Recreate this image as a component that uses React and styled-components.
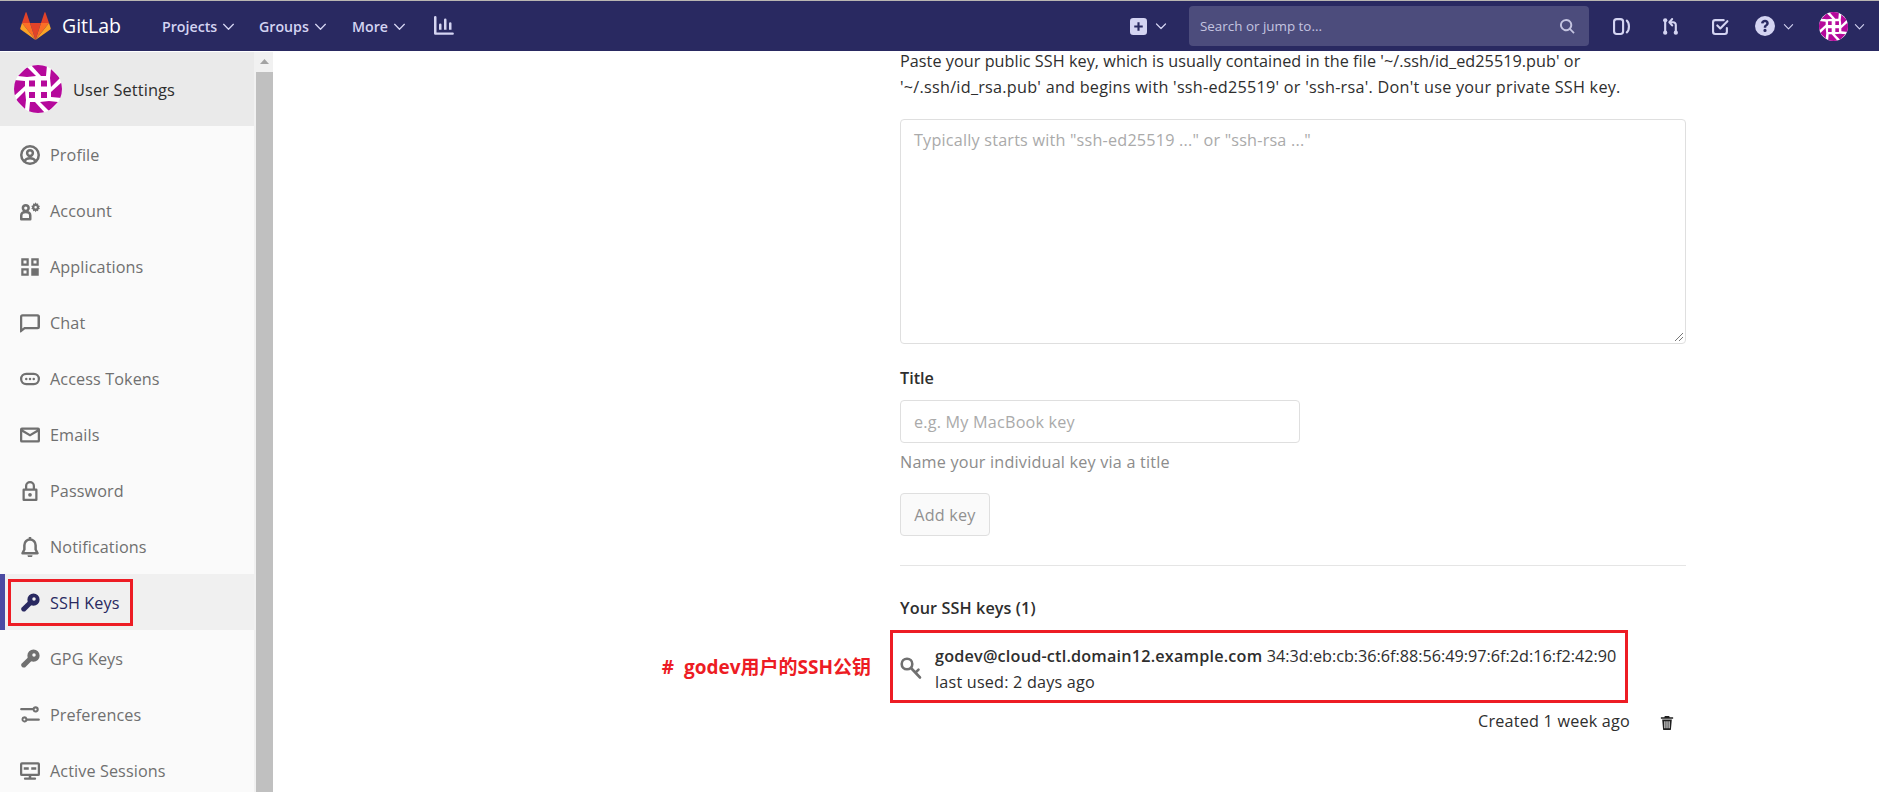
import React from 'react';
import styled, { createGlobalStyle } from 'styled-components';

const Global = createGlobalStyle`
  html, body { margin: 0; padding: 0; height: 792px; overflow: hidden; background: #fff; }
  body { font-family: "Open Sans", "Noto Sans CJK SC", sans-serif; font-size: 16.2px; letter-spacing: .2px; color: #2e2e2e; }
  * { box-sizing: border-box; }
`;

const Page = styled.div`display: flex; flex-direction: column; height: 792px; overflow: hidden;`;
const Header = styled.header`
  height: 51px; flex: none; display: flex; align-items: center; background: #292961;
  border-top: 1px solid #b9b6b2; padding: 0 14px 0 20px; color: #d1d1f0; letter-spacing: 0;
`;
const Brand = styled.div`display: flex; align-items: center; gap: 11px; width: 142px;`;
const BrandName = styled.span`color: #fff; font-size: 19.5px; line-height: 1;`;
const NavLink = styled.span`
  display: flex; align-items: center; gap: 5px; width: ${p => p.$w}px;
  font-size: 14.2px; font-weight: 600; color: #d4d4f2;
`;
const Spacer = styled.div`flex: 1;`;
const Search = styled.div`
  width: 400px; height: 40px; margin-right: 24px; border-radius: 4px; background: #4c4c7c;
  display: flex; align-items: center; justify-content: space-between; padding: 0 14px 0 11px;
  color: #c4c4e0; font-size: 13.4px;
`;
const HeaderIcon = styled.span`display: flex; align-items: center; gap: ${p => p.$gap || 8}px; width: ${p => p.$w}px; color: #d4d4f2;`;

const Body = styled.div`flex: 1; display: flex; min-height: 0;`;
const Sidebar = styled.aside`width: 254px; flex: none; background: #fafafa; overflow: hidden; margin-top: 1px;`;
const SideHead = styled.div`
  height: 74px; background: #eaeaea; display: flex; align-items: center; gap: 11px; padding-left: 14px;
  font-size: 16.4px; font-weight: 500; letter-spacing: .1px; color: #2e2e2e;
`;
const SideItem = styled.div`
  position: relative; height: 56px; display: flex; align-items: center; gap: 10px; padding: 2px 0 0 20px;
  font-size: 16.2px; letter-spacing: .1px; color: ${p => p.$active ? '#292961' : '#707070'};
  font-weight: ${p => p.$active ? 500 : 400};
  background: ${p => p.$active ? '#f0f0f0' : 'transparent'};
  box-shadow: ${p => p.$active ? 'inset 5px 0 0 #4b4ba3' : 'none'};
  & > svg { flex: none; }
`;
const Callout = styled.span`
  position: absolute; left: 8px; top: 5px; width: 125px; height: 47px; border: 3px solid #ed1c24; pointer-events: none;
`;
const Scrollbar = styled.div`width: 19px; flex: none; background: #f1f1f1; padding: 0 0 0 2px; display: flex; flex-direction: column; margin-top: 1px;`;
const ScrollUp = styled.div`height: 20px; display: flex; justify-content: center; padding-top: 7px;`;
const ScrollThumb = styled.div`flex: 1; background: #c0c0c0;`;

const Main = styled.main`flex: 1; padding: 0 0 0 627px; background: #fff; position: relative;`;
const Column = styled.div`width: 786px; margin-top: -3px;`;
const IntroLine = styled.div`line-height: 26px; white-space: nowrap; letter-spacing: ${p => p.$spacing}px; color: #2e2e2e;`;
const TextArea = styled.div`
  height: 225px; margin-top: 19px; border: 1px solid #dfdfdf; border-radius: 4px; position: relative;
  padding: 10px 13px; line-height: 21px; color: #aaa;
`;
const Grip = styled.svg`position: absolute; right: 1px; bottom: 1px;`;
const Label = styled.div`margin-top: 21px; font-weight: 600; letter-spacing: 0; line-height: 26px; color: #2e2e2e;`;
const Input = styled.div`
  width: 400px; height: 43px; margin-top: 9px; border: 1px solid #dfdfdf; border-radius: 4px;
  display: flex; align-items: center; padding-left: 13px; color: #aaa;
`;
const Help = styled.div`margin-top: 6px; line-height: 26px; color: #8c8c8c;`;
const Button = styled.div`
  width: 90px; height: 43px; margin-top: 18px; padding-top: 1px; border: 1px solid #dfdfdf; border-radius: 4px; background: #fafafa;
  display: flex; align-items: center; justify-content: center; color: #919191;
`;
const Rule = styled.hr`margin: 29px 0 0; border: 0; border-top: 1px solid #e5e5e5;`;
const KeysTitle = styled.div`margin-top: 29px; font-weight: 600; letter-spacing: .1px; line-height: 26px; color: #2e2e2e;`;
const KeyRow = styled.div`position: relative; margin-top: 9px; height: 73px; display: flex; align-items: center; gap: 12px; padding-top: 4px;`;
const KeyBox = styled.span`position: absolute; left: -10px; top: 0; width: 738px; height: 73px; border: 3px solid #ed1c24; pointer-events: none;`;
const Annotation = styled.span`
  position: absolute; right: calc(100% + 29px); top: 25px; white-space: nowrap; letter-spacing: 0;
  font-size: 19px; font-weight: 700; color: #ed1c24; line-height: 24px;
`;
const KeyText = styled.div`line-height: 26px; color: #2e2e2e; white-space: nowrap;`;
const KeyName = styled.strong`font-weight: 600; letter-spacing: .2px;`;
const Fingerprint = styled.span`letter-spacing: 0;`;
const KeyMeta = styled.div`
  display: flex; align-items: center; justify-content: flex-end; gap: 30px; margin-top: 5px; height: 26px;
  padding-right: 12px; color: #2e2e2e;
`;
const TrashWrap = styled.span`display: flex; margin-top: 3px;`;

const Avatar = ({ size }) => {
  const piece = (
    <>
      <polygon points="17,0 33,0 32,11 27,11" />
      <polygon points="4,11 13,2 22,11 13,12" />
    </>
  );
  return (
    <svg width={size} height={size} viewBox="0 0 48 48" style={{ flex: 'none' }}>
      <circle cx="24" cy="24" r="24" fill="#fff" />
      <defs><clipPath id={`c${size}`}><circle cx="24" cy="24" r="24" /></clipPath></defs>
      <g clipPath={`url(#c${size})`} fill="#b5099b">
        {[0, 90, 180, 270].map(a => <g key={a} transform={`rotate(${a} 24 24)`}>{piece}</g>)}
        <path d="M15 15.500h6v6h-6zM27 15.500h6v6h-6zM15 27h6v6h-6zM27 27h6v6h-6z" />
      </g>
    </svg>
  );
};

const Ic = ({ children, size = 16, color = 'currentColor' }) => (
  <svg width={size} height={size} viewBox="0 0 16 16" fill={color} style={{ flex: 'none' }}>{children}</svg>
);
const Line = styled.g`fill: none; stroke: currentColor; stroke-width: 2; stroke-linecap: round; stroke-linejoin: round;`;
const Chevron = ({ size = 13 }) => (
  <svg width={size} height={size} viewBox="0 0 12 12" fill="none" stroke="currentColor" strokeWidth="1.2" strokeLinecap="round" strokeLinejoin="round" style={{ flex: 'none' }}><path d="M1.5 4l4.500 4.500L10.500 4" /></svg>
);
const Logo = () => (
  <svg width="31" height="29" viewBox="0 0 31 29" style={{ flex: 'none' }}>
    <path fill="#e24329" d="M15.500 28 21 11H10z" />
    <path fill="#fc6d26" d="M15.500 28 10 11H2z" />
    <path fill="#fca326" d="M2 11 .3 16.200c-.2.500 0 1 .4 1.300L15.500 28z" />
    <path fill="#e24329" d="M2 11h8L6.600.7c-.2-.5-.9-.5-1.100 0z" />
    <path fill="#fc6d26" d="M15.500 28 21 11h8z" />
    <path fill="#fca326" d="M29 11l1.700 5.200c.2.500 0 1-.4 1.300L15.500 28z" />
    <path fill="#e24329" d="M29 11h-8L24.400.7c.2-.5.9-.5 1.100 0z" />
  </svg>
);

const keyIcon = (
  <>
    <path fillRule="evenodd" d="M10.800.4a4.900 4.900 0 1 1 0 9.800 4.900 4.900 0 0 1 0-9.800zm.4 2.900a1.400 1.400 0 1 0 0 2.800 1.400 1.400 0 0 0 0-2.800z" />
    <path d="M7 6.200 9.800 9 4 14.800H2.200L1 13.600V12z" />
  </>
);
const icons = {
  profile: <Line><circle cx="8" cy="8" r="7" /><circle cx="8" cy="6.400" r="2.300" /><path d="M3.500 13c.8-1.800 2.500-2.500 4.500-2.500s3.700.7 4.500 2.500" /></Line>,
  account: <><Line><circle cx="4.600" cy="5.600" r="2.300" /><path d="M1 14.600v-3c0-1.600 1.400-2.800 3.600-2.800s3.600 1.200 3.600 2.800v3z" /></Line><path fillRule="evenodd" d="M12.500 1l.7 1.200 1.300-.3.100 1.400L16 4l-.8 1.100.8 1-1.400.7-.1 1.300-1.300-.3-.7 1.200-.7-1.200-1.300.3-.1-1.300L9 6.100l.8-1L9 4l1.400-.7.1-1.400 1.300.3zm0 3a1 1 0 1 0 0 2 1 1 0 0 0 0-2z" /></>,
  apps: <><path fillRule="evenodd" d="M1 1h6v6H1zm1.800 1.800v2.400h2.400V2.800zM9 1h6v6H9zm1.800 1.800v2.400h2.400V2.800zM1 9h6v6H1zm1.800 1.800v2.400h2.400v-2.400z" /><path d="M9 9h6v6H9z" /></>,
  chat: <path fillRule="evenodd" d="M2 1h12a2 2 0 0 1 2 2v8a2 2 0 0 1-2 2H4l-3.300 2.600c-.3.200-.7 0-.7-.4V3a2 2 0 0 1 2-2zm0 1.800a.2.2 0 0 0-.2.200v9.400l1.600-1.200h10.400a.2.200 0 0 0 .2-.2V3a.2.200 0 0 0-.2-.2z" />,
  token: <path fillRule="evenodd" d="M5 3h6a5 5 0 0 1 0 10H5A5 5 0 0 1 5 3zm0 1.800a3.200 3.200 0 0 0 0 6.400h6a3.200 3.200 0 0 0 0-6.400zM5 7a1 1 0 1 1 0 2 1 1 0 0 1 0-2zm3 0a1 1 0 1 1 0 2 1 1 0 0 1 0-2zm3 0a1 1 0 1 1 0 2 1 1 0 0 1 0-2z" />,
  mail: <path fillRule="evenodd" d="M1.500 2h13A1.500 1.500 0 0 1 16 3.500v9a1.500 1.500 0 0 1-1.500 1.500h-13A1.500 1.500 0 0 1 0 12.500v-9A1.500 1.500 0 0 1 1.500 2zm.3 3.600v6.600h12.400V5.600L8 9.200zm.6-1.800L8 7.100l5.600-3.300z" />,
  lock: <path fillRule="evenodd" d="M8 0a4 4 0 0 1 4 4v2h1a1 1 0 0 1 1 1v8a1 1 0 0 1-1 1H3a1 1 0 0 1-1-1V7a1 1 0 0 1 1-1h1V4a4 4 0 0 1 4-4zm0 1.800A2.200 2.200 0 0 0 5.800 4v2h4.400V4A2.200 2.200 0 0 0 8 1.800zM3.800 7.800v6.400h8.400V7.800zM8 9.500a1.500 1.500 0 1 1 0 3 1.500 1.500 0 0 1 0-3z" />,
  bell: <><Line><path d="M8 2a4.500 4.500 0 0 1 4.500 4.500V10l1.500 3H2l1.500-3V6.500A4.500 4.500 0 0 1 8 2z" /></Line><path d="M7 0h2v2H7zM6 14.500h4a2 2 0 0 1-4 0z" /></>,
  key: keyIcon,
  prefs: <path fillRule="evenodd" d="M12.500 1a2.500 2.500 0 1 1-2.400 3.200H1a.9.900 0 0 1 0-1.800h9.100A2.500 2.500 0 0 1 12.500 1zm0 1.700a.8.800 0 1 0 0 1.600.8.800 0 0 0 0-1.600zM3.500 9a2.500 2.500 0 0 1 2.400 1.800H15a.9.900 0 0 1 0 1.800H5.900A2.500 2.500 0 1 1 3.500 9zm0 1.700a.8.800 0 1 0 0 1.600.8.800 0 0 0 0-1.600z" />,
  session: <path fillRule="evenodd" d="M1.500 1h13A1.500 1.500 0 0 1 16 2.500v8a1.500 1.500 0 0 1-1.500 1.500H9v1.200h3a.9.900 0 0 1 0 1.800H4a.9.900 0 0 1 0-1.800h3V12H1.500A1.500 1.500 0 0 1 0 10.500v-8A1.500 1.500 0 0 1 1.500 1zm.3 1.800v7.400h12.400V2.800zM3 5h4v2H3zm6 0h4v2H9z" />,
};

const menu = [
  ['Profile', 'profile'], ['Account', 'account'], ['Applications', 'apps'], ['Chat', 'chat'],
  ['Access Tokens', 'token'], ['Emails', 'mail'], ['Password', 'lock'], ['Notifications', 'bell'],
  ['SSH Keys', 'key', true], ['GPG Keys', 'key'], ['Preferences', 'prefs'], ['Active Sessions', 'session'],
];

export default function App() {
  return (
    <Page>
      <Global />
      <Header>
        <Brand><Logo /><BrandName>GitLab</BrandName></Brand>
        <NavLink $w={97}>Projects <Chevron /></NavLink>
        <NavLink $w={93}>Groups <Chevron /></NavLink>
        <NavLink $w={82}>More <Chevron /></NavLink>
        <HeaderIcon $w={20}>
          <Ic size={20}><path fillRule="evenodd" d="M1 0a1 1 0 0 1 1 1v12.200h13a.9.900 0 0 1 0 1.800H1a1 1 0 0 1-1-1V1a1 1 0 0 1 1-1zm4 6a1 1 0 0 1 1 1v4H4V7a1 1 0 0 1 1-1zm4-4a1 1 0 0 1 1 1v8H8V3a1 1 0 0 1 1-1zm4 3a1 1 0 0 1 1 1v5h-2V6a1 1 0 0 1 1-1z" /></Ic>
        </HeaderIcon>
        <Spacer />
        <HeaderIcon $w={59}>
          <Ic size={17}><path fillRule="evenodd" d="M3 0h10a3 3 0 0 1 3 3v10a3 3 0 0 1-3 3H3a3 3 0 0 1-3-3V3a3 3 0 0 1 3-3zm4 4v3H4v2h3v3h2V9h3V7H9V4z" /></Ic>
          <Chevron size={12} />
        </HeaderIcon>
        <Search>
          <span>Search or jump to...</span>
          <Ic size={15}><path fillRule="evenodd" d="M6.500 0a6.500 6.500 0 0 1 5.200 10.400l3.900 3.900-1.300 1.300-3.900-3.900A6.500 6.500 0 1 1 6.500 0zm0 2a4.500 4.500 0 1 0 0 9 4.500 4.500 0 0 0 0-9z" /></Ic>
        </Search>
        <HeaderIcon $w={49}>
          <Ic size={17}><Line><rect x="1" y="1" width="8.500" height="14" rx="2.500" /><path d="M13 2.500c1.500 1.200 2 3 2 5.500s-.5 4.300-2 5.500" /></Line></Ic>
        </HeaderIcon>
        <HeaderIcon $w={50}>
          <Ic size={17}><Line><path d="M3 3v10M13 13V6.500A2.500 2.500 0 0 0 10.500 4H8" /><path d="M9.500 1 7 4l2.500 3" /></Line><circle cx="3" cy="2.200" r="2" /><circle cx="3" cy="13.800" r="2" /><circle cx="13" cy="13.800" r="2" /></Ic>
        </HeaderIcon>
        <HeaderIcon $w={43}>
          <Ic size={17}><Line><path d="M14 9.500V13a2 2 0 0 1-2 2H3a2 2 0 0 1-2-2V4a2 2 0 0 1 2-2h8" /><path d="M5 7l2.800 2.800L14.500 3" /></Line></Ic>
        </HeaderIcon>
        <HeaderIcon $w={64}>
          <Ic size={20}><path fillRule="evenodd" d="M8 0a8 8 0 1 1 0 16A8 8 0 0 1 8 0zm0 3C6.200 3 5 4 4.800 5.800l2 .2C7 5.300 7.300 5 8 5c.6 0 1 .3 1 .8 0 .4-.2.7-.8 1.100C7.300 7.500 7 8.100 7 9.300h2c0-.7.100-.9.700-1.300C10.600 7.300 11 6.700 11 5.700 11 4.100 9.800 3 8 3zm0 7.200A1.300 1.300 0 1 0 8 12.800a1.300 1.300 0 0 0 0-2.600z" /></Ic>
          <Chevron size={11} />
        </HeaderIcon>
        <HeaderIcon $w={46} $gap={6}>
          <Avatar size={29} />
          <Chevron size={11} />
        </HeaderIcon>
      </Header>
      <Body>
        <Sidebar>
          <SideHead><Avatar size={48} />User Settings</SideHead>
          {menu.map(([label, icon, active]) => (
            <SideItem key={label} $active={active}>
              {active && <Callout />}
              <Ic size={20}>{icons[icon]}</Ic>
              <span>{label}</span>
            </SideItem>
          ))}
        </Sidebar>
        <Scrollbar>
          <ScrollUp><svg width="9" height="5" viewBox="0 0 9 5"><path fill="#a3a3a3" d="M4.500 0 9 5H0z" /></svg></ScrollUp>
          <ScrollThumb />
        </Scrollbar>
        <Main>
          <Column>
            <IntroLine $spacing={0.05}>Paste your public SSH key, which is usually contained in the file '~/.ssh/id_ed25519.pub' or</IntroLine>
            <IntroLine $spacing={0.26}>'~/.ssh/id_rsa.pub' and begins with 'ssh-ed25519' or 'ssh-rsa'. Don't use your private SSH key.</IntroLine>
            <TextArea>
              Typically starts with "ssh-ed25519 ..." or "ssh-rsa ..."
              <Grip width="10" height="10" viewBox="0 0 10 10"><path stroke="#777" strokeWidth="1" d="M9 1 1 9M9 5 5 9" /></Grip>
            </TextArea>
            <Label>Title</Label>
            <Input>e.g. My MacBook key</Input>
            <Help>Name your individual key via a title</Help>
            <Button>Add key</Button>
            <Rule />
            <KeysTitle>Your SSH keys (1)</KeysTitle>
            <KeyRow>
              <KeyBox />
              <Annotation>#&nbsp;&nbsp;godev用户的SSH公钥</Annotation>
              <svg width="23" height="26" viewBox="0 0 23 26" style={{ flex: 'none' }} fill="none" stroke="#707070" strokeWidth="2.600" strokeLinecap="round">
                <circle cx="7" cy="8" r="5.300" />
                <path d="M11 12l9 9.500M15.500 16.700l3-3" />
              </svg>
              <KeyText>
                <div><KeyName>godev@cloud-ctl.domain12.example.com</KeyName> <Fingerprint>34:3d:eb:cb:36:6f:88:56:49:97:6f:2d:16:f2:42:90</Fingerprint></div>
                <div>last used: 2 days ago</div>
              </KeyText>
            </KeyRow>
            <KeyMeta>
              <span>Created 1 week ago</span>
              <TrashWrap>
                <Ic size={14} color="#1f1f1f"><path d="M5.500 0h5l.5 1.500H15V3H1V1.500h4zM2.500 4h11l-1 11a1 1 0 0 1-1 1h-7a1 1 0 0 1-1-1zM5 6v8h1.200V6zm2.400 0v8h1.200V6zM9.800 6v8H11V6z" /></Ic>
              </TrashWrap>
            </KeyMeta>
          </Column>
        </Main>
      </Body>
    </Page>
  );
}
